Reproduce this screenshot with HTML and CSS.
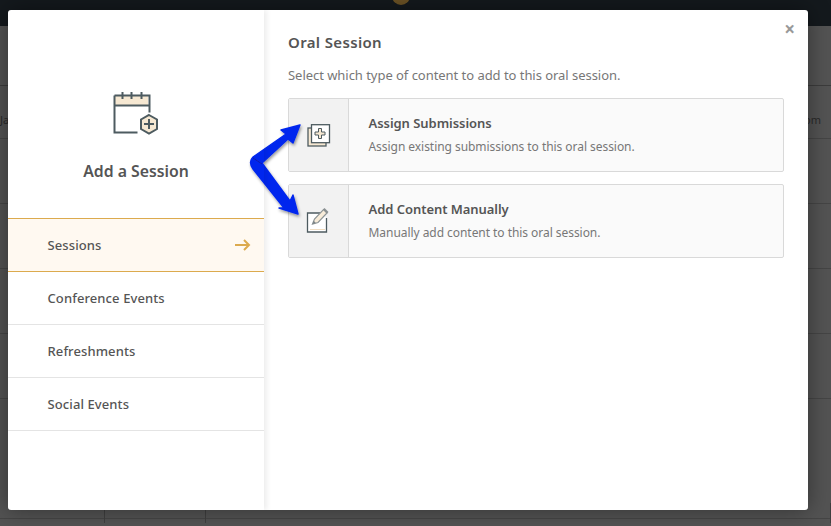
FILE: index.html
```html
<!DOCTYPE html>
<html lang="en">
<head>
  <meta charset="UTF-8" />
  <title>Add a Session</title>
  <link rel="stylesheet" href="styles.css">
</head>
<body>

<div class="backdrop">
  <div class="topbar"><span class="avatar"></span></div>
  <div class="subbar"></div>
  <div class="bg-head"><span>Ja</span><span>om</span></div>
  <div class="bg-row"></div>
  <div class="bg-row"></div>
  <div class="bg-row"></div>
  <div class="bg-row"></div>
  <div class="bg-row bg-tall"></div>
  <div class="bg-cells"><i></i><i></i><i></i></div>
</div>

<div class="modal">
  <div class="side">
    <div class="side-top">
      <svg class="cal-icon" width="48" height="48" viewBox="0 0 48 48" fill="none">
        <rect x="1" y="5" width="34" height="9" fill="#f6e8d2"/>
        <path d="M1.5 4.5h35v17M1.5 4.5v37h23M1.5 14.5h35" stroke="#4d5b60" stroke-width="2"/>
        <path d="M9.5 1v7M18.5 1v7M28.500 1v7" stroke="#4d5b60" stroke-width="2"/>
        <path d="M36 24l8 4.500v9.500l-8 4.500-8-4.500v-9.500z" fill="#f6e8d2" stroke="#4d5b60" stroke-width="2"/>
        <path d="M36 28v10M31 33h10" stroke="#4d5b60" stroke-width="2"/>
      </svg>
      <h2>Add a Session</h2>
    </div>
    <ul class="menu">
      <li class="active">Sessions
        <svg width="16" height="12" viewBox="0 0 16 12" fill="none"><path d="M0 6h14M9 1l5 5-5 5" stroke="#dcaa4e" stroke-width="2"/></svg>
      </li>
      <li>Conference Events</li>
      <li>Refreshments</li>
      <li>Social Events</li>
    </ul>
  </div>

  <div class="main">
    <span class="close">×</span>
    <h3>Oral Session</h3>
    <p class="lead">Select which type of content to add to this oral session.</p>

    <div class="option">
      <div class="option-icon">
        <svg class="icon-assign" width="24" height="24" viewBox="0 0 24 24" fill="none">
          <rect x="1" y="4" width="18" height="18" fill="#f6e8d2" stroke="#4d5b60" stroke-width="1.300"/>
          <rect x="4.500" y="0.700" width="18" height="18" fill="#fff" stroke="#4d5b60" stroke-width="1.300"/>
          <path d="M11.500 4.500h3v3.500h3.500v3h-3.500v3.500h-3v-3.500h-3.500v-3h3.500z" fill="#f6e8d2" stroke="#4d5b60" stroke-width="1"/>
        </svg>
      </div>
      <div class="option-text">
        <h4>Assign Submissions</h4>
        <p>Assign existing submissions to this oral session.</p>
      </div>
    </div>

    <div class="option">
      <div class="option-icon">
        <svg class="icon-manual" width="26" height="26" viewBox="0 0 26 26" fill="none">
          <path d="M20.500 11v14h-19v-19h13" fill="#fff" stroke="#4d5b60" stroke-width="1.300"/>
          <path d="M4 22.500h15" stroke="#f0dcc0" stroke-width="1"/>
          <path d="M6.500 17l2-5 9-9.500 3.500 3.500-9 9.500z" fill="#f8ecd9" stroke="#8d9496" stroke-width="1.200"/>
          <path d="M18.500 1l4 4-1.500 1.500-4-4z" fill="#8a9092"/>
          <path d="M6.500 17l1.200-3.200 2.200 2.200z" fill="#7c8486"/>
        </svg>
      </div>
      <div class="option-text">
        <h4>Add Content Manually</h4>
        <p>Manually add content to this oral session.</p>
      </div>
    </div>
  </div>
</div>

<svg class="arrows" width="70" height="100" viewBox="0 0 70 100">
  <defs>
    <filter id="arrowShadow" x="-20%" y="-20%" width="150%" height="150%">
      <feDropShadow dx="1" dy="2" stdDeviation="1.500" flood-color="#000" flood-opacity="0.4"/>
    </filter>
  </defs>
  <g filter="url(#arrowShadow)">
    <path fill="#0628ee" stroke="#0628ee" stroke-width="1.400" stroke-linejoin="round" d="M54 3L35 8l5 4L7 35q-5 5 0 12l31 39-5 0 19 6-5-19-3 6L16 41 42 17l5 4z"/>
    <path d="M7 36l9 6" stroke="#0a1cab" stroke-width="1"/>
  </g>
</svg>

</body>
</html>
```

FILE: styles.css
```css
body {
  margin: 0;
  width: 831px;
  height: 526px;
  overflow: hidden;
  background: #535353;
  font-family: "Noto Sans", sans-serif;
  color: #555;
}

.backdrop {
  height: 526px;
  overflow: hidden;
}
.topbar {
  height: 26px;
  background: #14191d;
  display: flex;
  justify-content: center;
}
.avatar {
  width: 18px;
  height: 18px;
  margin: -13px 0 0 -30px;
  border-radius: 50%;
  background: #6b5225;
}
.subbar {
  height: 59px;
  border-bottom: 1px solid #3c3c3c;
}
.bg-head {
  height: 53px;
  padding: 14px 10px 0 0;
  box-sizing: border-box;
  display: flex;
  justify-content: space-between;
  align-items: center;
  color: #2a2a2a;
  font-size: 11px;
  border-bottom: 1px solid #454545;
}
.bg-row {
  height: 64px;
  border-bottom: 1px solid #454545;
}
.bg-tall {
  height: 119px;
}
.bg-cells {
  height: 20px;
  margin-top: -16px;
  display: grid;
  grid-template-columns: 105px 101px 1fr;
}
.bg-cells i {
  border-right: 1px solid #3f3f3f;
}

.modal {
  position: absolute;
  left: 8px;
  top: 10px;
  width: 800px;
  height: 500px;
  display: flex;
  background: #fff;
  border-radius: 3px;
  overflow: hidden;
  box-shadow: 0 0 22px rgba(0, 0, 0, 0.4);
}

.side {
  width: 256px;
  flex: none;
  box-shadow: 3px 0 5px rgba(0, 0, 0, 0.07);
  z-index: 1;
}
.side-top {
  height: 208px;
  box-sizing: border-box;
  padding-top: 81px;
  text-align: center;
}
.cal-icon {
  display: block;
  margin: 0 auto;
  transform: translateX(1px);
}
.side-top h2 {
  margin: 21px 0 0;
  font-size: 15.800px;
  line-height: 22px;
  font-weight: 600;
  color: #555;
}
.menu {
  list-style: none;
  margin: 0;
  padding: 0;
}
.menu li {
  height: 52px;
  padding: 0 13px 0 39.500px;
  display: flex;
  align-items: center;
  justify-content: space-between;
  font-size: 13px;
  letter-spacing: 0.1px;
  font-weight: 500;
  color: #555;
  border-bottom: 1px solid #e4e4e4;
}
.menu li.active {
  background: #fff9f1;
  border-top: 1px solid #dcaa4e;
  border-bottom: 1px solid #dcaa4e;
}

.main {
  flex: 1;
  position: relative;
  padding: 21px 24px 0 24px;
}
.main h3 {
  margin: 0;
  font-size: 15px;
  letter-spacing: 0.35px;
  line-height: 22px;
  font-weight: 600;
  color: #555;
}
.lead {
  margin: 13px 0 0;
  font-size: 13px;
  letter-spacing: -0.04px;
  line-height: 18px;
  color: #777;
}
.close {
  position: absolute;
  right: 13px;
  top: 8px;
  font-size: 19px;
  line-height: 22px;
  font-weight: 700;
  color: #999;
}

.option {
  display: flex;
  height: 72px;
  margin-top: 12px;
  background: #fafafa;
  border: 1px solid #d9d9d9;
  border-radius: 2px;
}
.lead + .option {
  margin-top: 14px;
}
.option-icon {
  width: 59px;
  flex: none;
  display: flex;
  align-items: center;
  justify-content: center;
  background: #f2f2f2;
  border-right: 1px solid #d9d9d9;
}
.icon-assign {
  margin-top: 2px;
}
.icon-manual {
  margin-bottom: 2px;
}
.option-text {
  padding: 15px 0 0 19.500px;
}
.option-text h4 {
  margin: 0;
  font-size: 13px;
  letter-spacing: -0.05px;
  line-height: 18px;
  font-weight: 600;
  color: #555;
}
.option-text p {
  margin: 6px 0 0;
  font-size: 12px;
  letter-spacing: -0.05px;
  line-height: 17px;
  color: #777;
}

.arrows {
  position: absolute;
  left: 246px;
  top: 122px;
}
```
